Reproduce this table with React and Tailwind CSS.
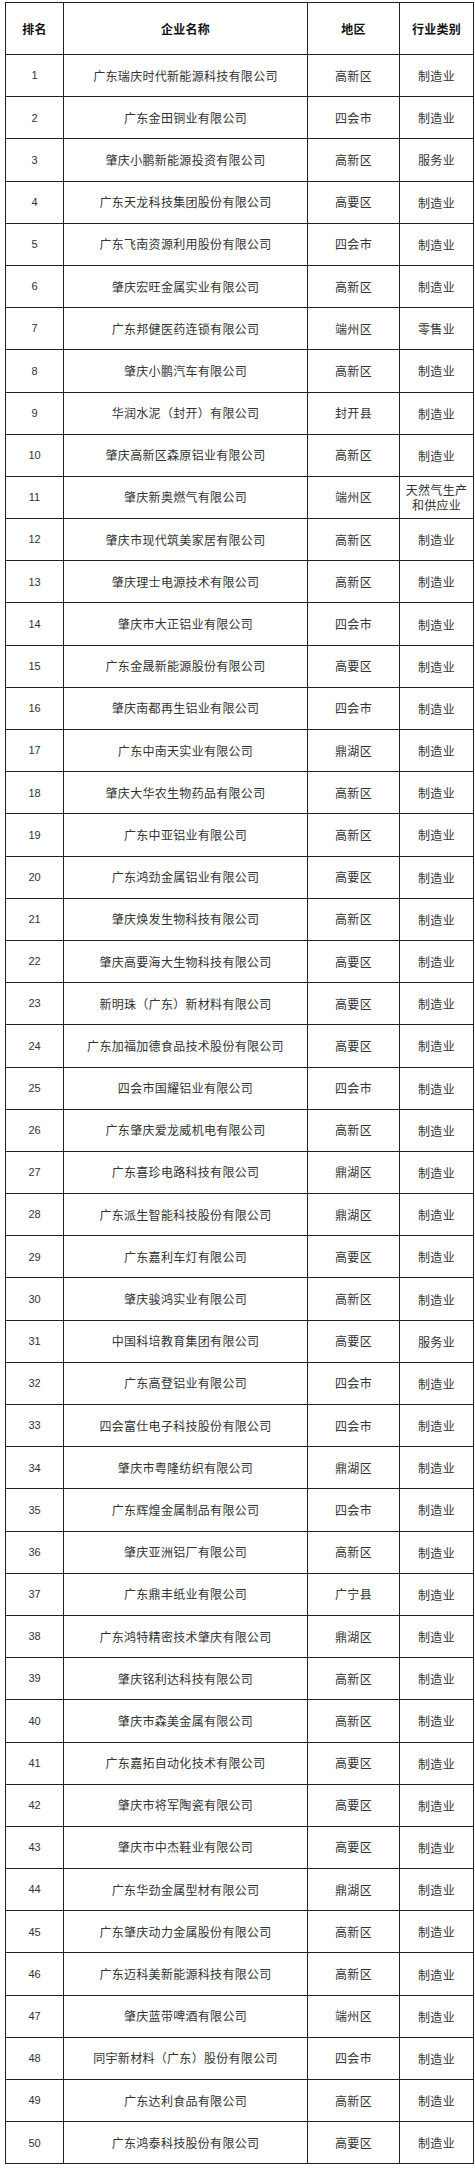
const ROWS = [
  ['广东瑞庆时代新能源科技有限公司', '高新区', '制造业'],
  ['广东金田铜业有限公司', '四会市', '制造业'],
  ['肇庆小鹏新能源投资有限公司', '高新区', '服务业'],
  ['广东天龙科技集团股份有限公司', '高要区', '制造业'],
  ['广东飞南资源利用股份有限公司', '四会市', '制造业'],
  ['肇庆宏旺金属实业有限公司', '高新区', '制造业'],
  ['广东邦健医药连锁有限公司', '端州区', '零售业'],
  ['肇庆小鹏汽车有限公司', '高新区', '制造业'],
  ['华润水泥（封开）有限公司', '封开县', '制造业'],
  ['肇庆高新区森原铝业有限公司', '高新区', '制造业'],
  ['肇庆新奥燃气有限公司', '端州区', '天然气生产|和供应业'],
  ['肇庆市现代筑美家居有限公司', '高新区', '制造业'],
  ['肇庆理士电源技术有限公司', '高新区', '制造业'],
  ['肇庆市大正铝业有限公司', '四会市', '制造业'],
  ['广东金晟新能源股份有限公司', '高要区', '制造业'],
  ['肇庆南都再生铝业有限公司', '四会市', '制造业'],
  ['广东中南天实业有限公司', '鼎湖区', '制造业'],
  ['肇庆大华农生物药品有限公司', '高新区', '制造业'],
  ['广东中亚铝业有限公司', '高新区', '制造业'],
  ['广东鸿劲金属铝业有限公司', '高要区', '制造业'],
  ['肇庆焕发生物科技有限公司', '高新区', '制造业'],
  ['肇庆高要海大生物科技有限公司', '高要区', '制造业'],
  ['新明珠（广东）新材料有限公司', '高要区', '制造业'],
  ['广东加福加德食品技术股份有限公司', '高要区', '制造业'],
  ['四会市国耀铝业有限公司', '四会市', '制造业'],
  ['广东肇庆爱龙威机电有限公司', '高新区', '制造业'],
  ['广东喜珍电路科技有限公司', '鼎湖区', '制造业'],
  ['广东派生智能科技股份有限公司', '鼎湖区', '制造业'],
  ['广东嘉利车灯有限公司', '高要区', '制造业'],
  ['肇庆骏鸿实业有限公司', '高新区', '制造业'],
  ['中国科培教育集团有限公司', '高要区', '服务业'],
  ['广东高登铝业有限公司', '四会市', '制造业'],
  ['四会富仕电子科技股份有限公司', '四会市', '制造业'],
  ['肇庆市粤隆纺织有限公司', '鼎湖区', '制造业'],
  ['广东辉煌金属制品有限公司', '四会市', '制造业'],
  ['肇庆亚洲铝厂有限公司', '高新区', '制造业'],
  ['广东鼎丰纸业有限公司', '广宁县', '制造业'],
  ['广东鸿特精密技术肇庆有限公司', '鼎湖区', '制造业'],
  ['肇庆铭利达科技有限公司', '高新区', '制造业'],
  ['肇庆市森美金属有限公司', '高新区', '制造业'],
  ['广东嘉拓自动化技术有限公司', '高要区', '制造业'],
  ['肇庆市将军陶瓷有限公司', '高要区', '制造业'],
  ['肇庆市中杰鞋业有限公司', '高要区', '制造业'],
  ['广东华劲金属型材有限公司', '鼎湖区', '制造业'],
  ['广东肇庆动力金属股份有限公司', '高新区', '制造业'],
  ['广东迈科美新能源科技有限公司', '高新区', '制造业'],
  ['肇庆蓝带啤酒有限公司', '端州区', '制造业'],
  ['同宇新材料（广东）股份有限公司', '四会市', '制造业'],
  ['广东达利食品有限公司', '高新区', '制造业'],
  ['广东鸿泰科技股份有限公司', '高要区', '制造业']
];

const cjk = "font-['Noto_Sans_CJK_SC','Noto_Sans',sans-serif]";

export default function App() {
  return (
    <main className="min-h-[2170px] bg-white pt-[2px] pl-[5px]">
      <table className={`w-[468px] table-fixed border-collapse text-[#333] ${cjk}`}>
        <colgroup>
          <col className="w-[58px]" />
          <col className="w-[244px]" />
          <col className="w-[92px]" />
          <col className="w-[74px]" />
        </colgroup>
        <thead>
          <tr className="h-[52px]">
            {['排名', '企业名称', '地区', '行业类别'].map((h) => (
              <th
                key={h}
                className="border border-[#222] px-0 text-center align-middle text-[12px] font-bold tracking-[0.3px] text-[#111]"
              >
                {h}
              </th>
            ))}
          </tr>
        </thead>
        <tbody>
          {ROWS.map(([name, area, kind], i) => (
            <tr key={name} className="h-[42.2px]">
              <td className="border border-[#222] text-center align-middle font-['Liberation_Sans',sans-serif] text-[11px] text-[#333]">
                {i + 1}
              </td>
              <td className="border border-[#222] text-center align-middle text-[12px] tracking-[0.3px]">
                {name}
              </td>
              <td className="border border-[#222] text-center align-middle text-[12px] tracking-[0.3px]">
                {area}
              </td>
              <td className="border border-[#222] px-0 text-center align-middle text-[12px] leading-[15px] tracking-[0.3px]">
                {kind.split('|').map((line) => (
                  <div key={line}>{line}</div>
                ))}
              </td>
            </tr>
          ))}
        </tbody>
      </table>
    </main>
  );
}
